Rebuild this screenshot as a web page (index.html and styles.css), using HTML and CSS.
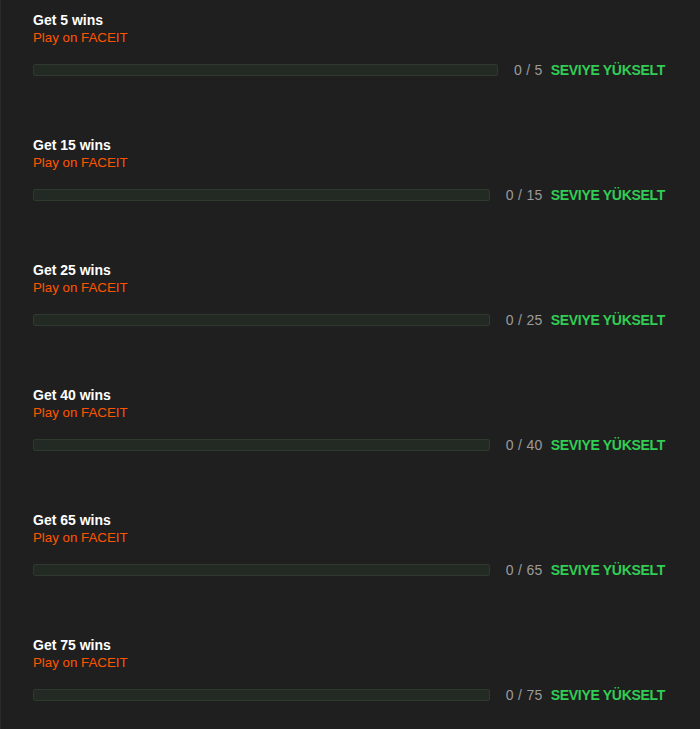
FILE: index.html
```html
<!DOCTYPE html>
<html>
<head>
<meta charset="utf-8">
<link rel="stylesheet" href="styles.css">
</head>
<body>
<div class="list">
  <div class="item">
    <div class="title">Get 5 wins</div>
    <div class="sub">Play on FACEIT</div>
    <div class="row"><div class="bar"></div><span class="count">0 / 5</span><span class="btn">SEVIYE YÜKSELT</span></div>
  </div>
  <div class="item">
    <div class="title">Get 15 wins</div>
    <div class="sub">Play on FACEIT</div>
    <div class="row"><div class="bar"></div><span class="count">0 / 15</span><span class="btn">SEVIYE YÜKSELT</span></div>
  </div>
  <div class="item">
    <div class="title">Get 25 wins</div>
    <div class="sub">Play on FACEIT</div>
    <div class="row"><div class="bar"></div><span class="count">0 / 25</span><span class="btn">SEVIYE YÜKSELT</span></div>
  </div>
  <div class="item">
    <div class="title">Get 40 wins</div>
    <div class="sub">Play on FACEIT</div>
    <div class="row"><div class="bar"></div><span class="count">0 / 40</span><span class="btn">SEVIYE YÜKSELT</span></div>
  </div>
  <div class="item">
    <div class="title">Get 65 wins</div>
    <div class="sub">Play on FACEIT</div>
    <div class="row"><div class="bar"></div><span class="count">0 / 65</span><span class="btn">SEVIYE YÜKSELT</span></div>
  </div>
  <div class="item">
    <div class="title">Get 75 wins</div>
    <div class="sub">Play on FACEIT</div>
    <div class="row"><div class="bar"></div><span class="count">0 / 75</span><span class="btn">SEVIYE YÜKSELT</span></div>
  </div>
</div>
</body>
</html>
```
FILE: styles.css
```css
html, body {
  margin: 0;
  padding: 0;
  background: #1f1f1f;
  height: 100%;
}
body {
  font-family: "Liberation Sans", Arial, sans-serif;
  font-size: 14px;
}
.list {
  border-left: 1px solid #2a2a2a;
  min-height: 729px;
  box-sizing: border-box;
  padding: 10px 35px 0 32px;
}
.item {
  height: 125px;
  box-sizing: border-box;
}
.title {
  color: #ffffff;
  font-weight: bold;
  line-height: 18px;
  padding-top: 1px;
}
.sub {
  color: #ff5500;
  font-size: 13.3px;
  line-height: 18px;
}
.row {
  display: flex;
  align-items: center;
  height: 18px;
  margin-top: 14px;
}
.bar {
  flex: 1;
  height: 12px;
  box-sizing: border-box;
  background: #232a23;
  border: 1px solid #2d3a2d;
  border-radius: 2px;
}
.count {
  color: #9b9b9b;
  margin-left: 16px;
  letter-spacing: 0.3px;
  white-space: pre;
}
.btn {
  color: #32cd55;
  font-weight: bold;
  margin-left: 8px;
  letter-spacing: -0.3px;
}
```
